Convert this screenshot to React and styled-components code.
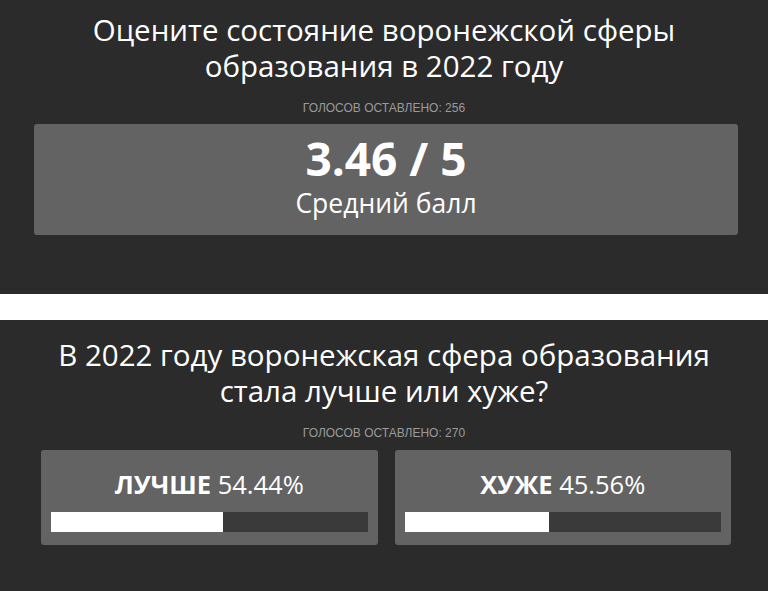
import React from 'react';
import styled, { createGlobalStyle } from 'styled-components';

const Global = createGlobalStyle`
  body {
    margin: 0;
    background: #ffffff;
    font-family: "Open Sans", "DejaVu Sans", sans-serif;
  }
`

const Section = styled.section`
  background: #2b2b2b;
  color: #ffffff;
  padding: ${p => p.$pad};
  text-align: center;
`
const Gap = styled.div`
  height: 26px;
  background: #ffffff;
`
const Title = styled.h2`
  margin: 0;
  font-size: 29.5px;
  line-height: 36px;
  font-weight: 400;
`
const Votes = styled.div`
  margin: ${p => p.$margin};
  font-family: "Liberation Sans Narrow", "Liberation Sans", sans-serif;
  font-size: 12px;
  line-height: 14px;
  color: #9a9a9a;
  text-transform: uppercase;
`
const ScoreBox = styled.div`
  margin: 0 30px 0 34px;
  height: 111px;
  background: #636363;
  border-radius: 3px;
  display: flex;
  flex-direction: column;
  align-items: center;
  justify-content: center;
`
const Score = styled.div`
  font-size: 46px;
  font-weight: 700;
  line-height: 50px;
  margin-top: -4px;
`
const ScoreLabel = styled.div`
  font-size: 26.5px;
  line-height: 40px;
`
const Cards = styled.div`
  display: grid;
  grid-template-columns: 1fr 1fr;
  gap: 17px;
  margin: 0 37px 0 41px;
`
const Card = styled.div`
  background: #636363;
  border-radius: 3px;
  padding: 18px 10px 13px;
`
const Label = styled.div`
  font-size: 25.5px;
  line-height: 32px;
  margin-bottom: 12px;
  b { font-weight: 700; }
`
const Track = styled.div`
  height: 20px;
  background: #3a3a3a;
`
const Fill = styled.div`
  height: 100%;
  background: #ffffff;
`

const options = [
  { name: 'ЛУЧШЕ', pct: 54.44 },
  { name: 'ХУЖЕ', pct: 45.56 },
]

export default function App() {
  return (
    <>
      <Global />
      <Section $pad="12px 0 59px">
        <Title>Оцените состояние воронежской сферы<br />образования в 2022 году</Title>
        <Votes $margin="17px 0 9px">Голосов оставлено: 256</Votes>
        <ScoreBox>
          <Score>3.46 / 5</Score>
          <ScoreLabel>Средний балл</ScoreLabel>
        </ScoreBox>
      </Section>
      <Gap />
      <Section $pad="17px 0 60px">
        <Title>В 2022 году воронежская сфера образования<br />стала лучше или хуже?</Title>
        <Votes $margin="17px 0 10px">Голосов оставлено: 270</Votes>
        <Cards>
          {options.map(o => (
            <Card key={o.name}>
              <Label><b>{o.name}</b> {o.pct.toFixed(2)}%</Label>
              <Track>
                <Fill style={{ width: o.pct + '%' }} />
              </Track>
            </Card>
          ))}
        </Cards>
      </Section>
    </>
  );
}
